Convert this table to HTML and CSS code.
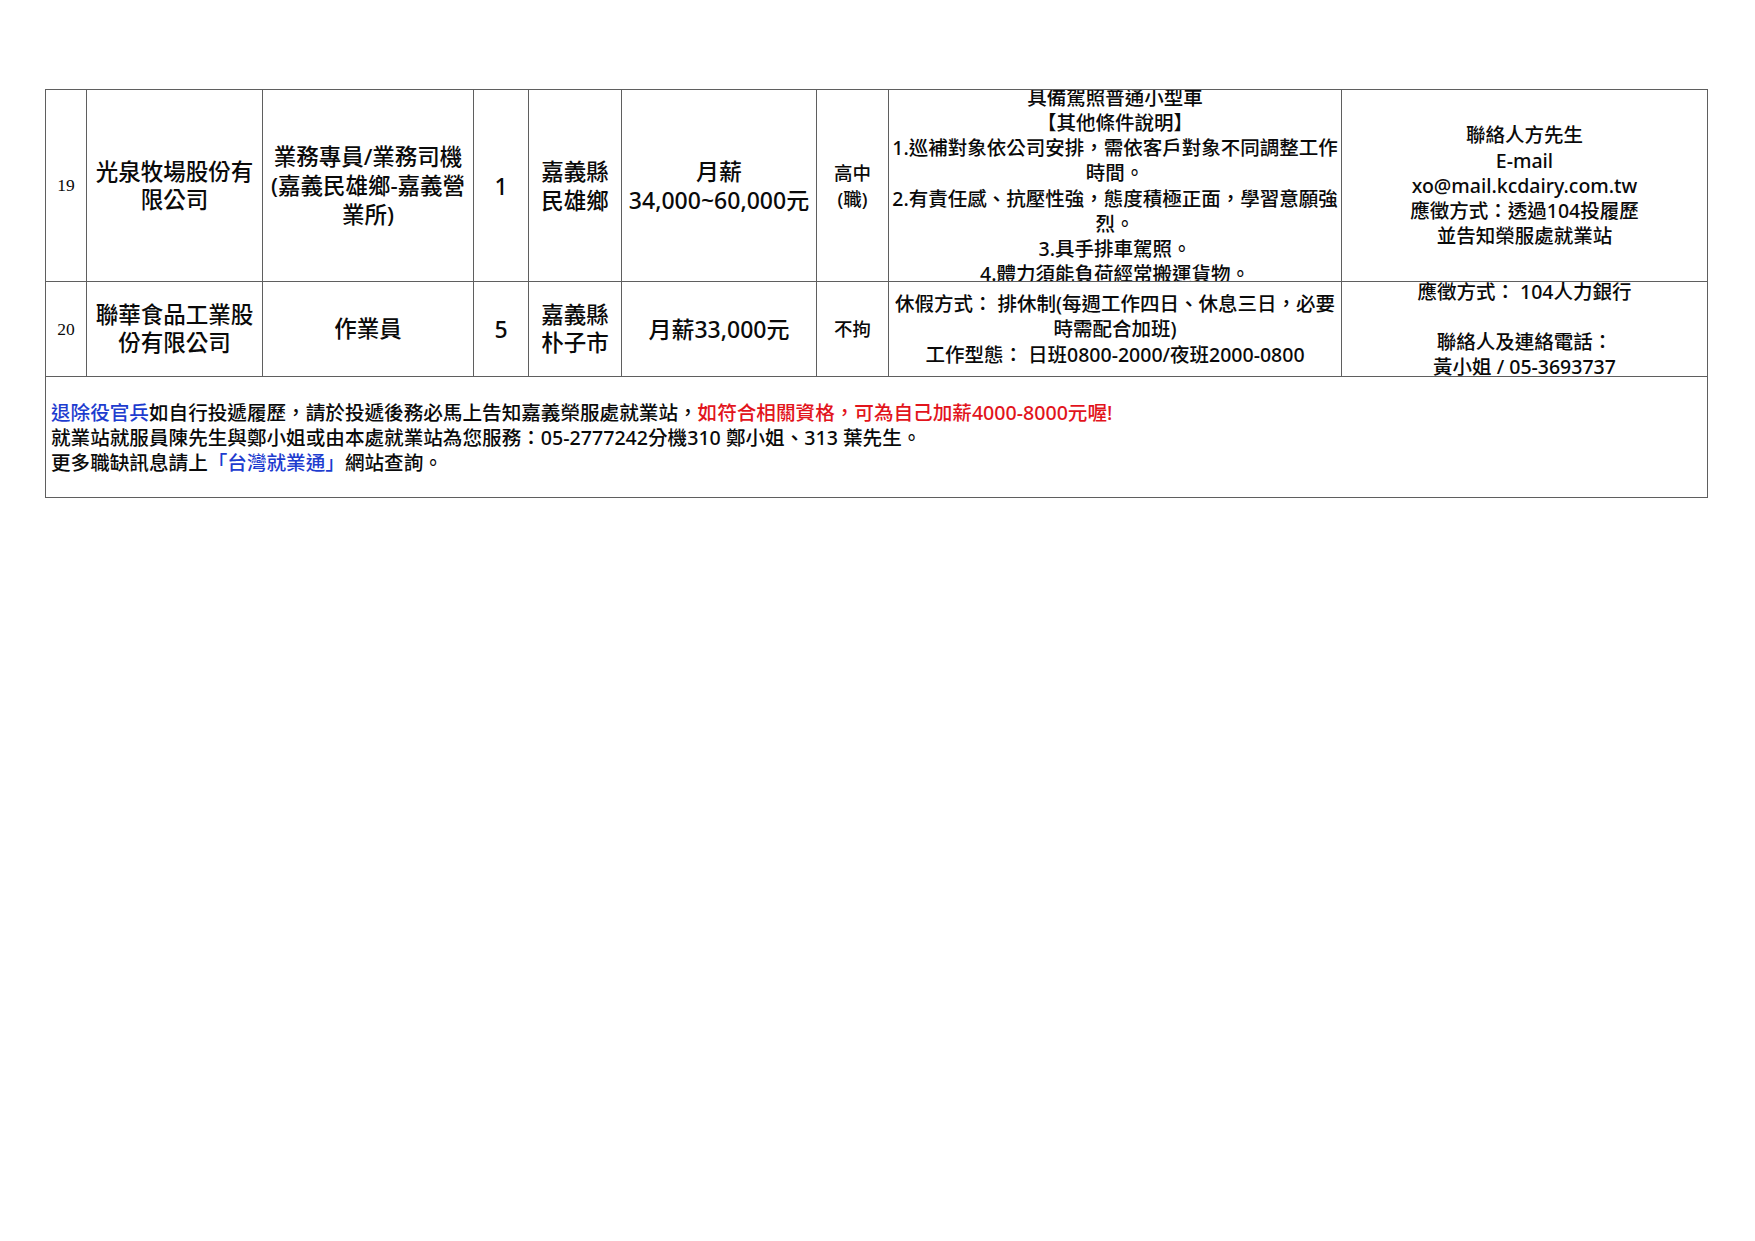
FILE: index.html
```html
<!DOCTYPE html>
<html lang="zh-Hant">
<head>
<meta charset="utf-8">
<title>職缺列表</title>
<link rel="stylesheet" href="styles.css">
</head>
<body>
<div class="sheet">
  <div class="cell num">19</div>
  <div class="cell big"><div class="txt lh28">光泉牧場股份有<br>限公司</div></div>
  <div class="cell big"><div class="txt lh29">業務專員/業務司機<br>(嘉義民雄鄉-嘉義營<br>業所)</div></div>
  <div class="cell count">1</div>
  <div class="cell big"><div class="txt lh29">嘉義縣<br>民雄鄉</div></div>
  <div class="cell big salary"><div class="txt lh29">月薪<br>34,000~60,000元</div></div>
  <div class="cell edu"><div class="txt lh26">高中<br>(職)</div></div>
  <div class="cell small"><div class="txt">具備駕照普通小型車<br>【其他條件說明】<br>1.巡補對象依公司安排，需依客戶對象不同調整工作<br>時間。<br>2.有責任感、抗壓性強，態度積極正面，學習意願強<br>烈。<br>3.具手排車駕照。<br>4.體力須能負荷經常搬運貨物。</div></div>
  <div class="cell small"><div class="txt">聯絡人方先生<br>E-mail<br>xo@mail.kcdairy.com.tw<br>應徵方式：透過104投履歷<br>並告知榮服處就業站</div></div>

  <div class="cell num">20</div>
  <div class="cell big"><div class="txt lh28">聯華食品工業股<br>份有限公司</div></div>
  <div class="cell big"><div class="txt">作業員</div></div>
  <div class="cell count">5</div>
  <div class="cell big"><div class="txt lh28">嘉義縣<br>朴子市</div></div>
  <div class="cell big salary"><div class="txt">月薪33,000元</div></div>
  <div class="cell edu"><div class="txt">不拘</div></div>
  <div class="cell small"><div class="txt">休假方式： 排休制(每週工作四日、休息三日，必要<br>時需配合加班)<br>工作型態： 日班0800-2000/夜班2000-0800</div></div>
  <div class="cell small"><div class="txt">應徵方式： 104人力銀行<br><br>聯絡人及連絡電話：<br>黃小姐 / 05-3693737</div></div>

  <div class="foot">
    <p><span class="blue">退除役官兵</span>如自行投遞履歷，請於投遞後務必馬上告知嘉義榮服處就業站，<span class="red">如符合相關資格，可為自己加薪4000-8000元喔!</span></p>
    <p>就業站就服員陳先生與鄭小姐或由本處就業站為您服務：05-2777242分機310 鄭小姐、313 葉先生。</p>
    <p>更多職缺訊息請上<span class="blue">「台灣就業通」</span>網站查詢。</p>
  </div>
</div>
</body>
</html>
```

FILE: styles.css
```css
html, body {
  margin: 0;
  padding: 0;
  background: #ffffff;
}

body {
  font-family: "Noto Sans", "Noto Sans CJK TC", sans-serif;
  font-weight: 500;
  color: #0a0a0a;
}

.sheet {
  display: grid;
  grid-template-columns: 41px 176px 211px 55px 93px 195px 72px 453px 366px;
  grid-template-rows: 192px 95px 121px;
  width: max-content;
  margin: 89px 0 0 45px;
  border-left: 1px solid #5f5f5f;
  border-top: 1px solid #5f5f5f;
}

.cell {
  box-sizing: border-box;
  border-right: 1px solid #5f5f5f;
  border-bottom: 1px solid #5f5f5f;
  display: flex;
  align-items: center;
  justify-content: center;
  text-align: center;
  overflow: hidden;
}

.txt {
  white-space: nowrap;
}

.num {
  font-family: "Liberation Serif", "DejaVu Serif", serif;
  font-weight: 400;
  font-size: 17.5px;
}

.big {
  font-size: 22.5px;
  line-height: 28px;
}

.salary {
  font-size: 23px;
}

.count {
  font-size: 23px;
}

.edu {
  font-size: 18.5px;
  line-height: 26px;
}

.small {
  font-size: 19.5px;
  line-height: 25.2px;
}

.lh26 { line-height: 26px; }
.lh28 { line-height: 28px; }
.lh29 { line-height: 29px; }

.foot {
  grid-column: 1 / -1;
  box-sizing: border-box;
  border-right: 1px solid #5f5f5f;
  border-bottom: 1px solid #5f5f5f;
  padding: 23px 0 0 5px;
  font-size: 19.6px;
  line-height: 25.2px;
}

.foot p {
  margin: 0;
  white-space: nowrap;
}

.blue {
  color: #1d3ccf;
}

.red {
  color: #e2141c;
}
```
